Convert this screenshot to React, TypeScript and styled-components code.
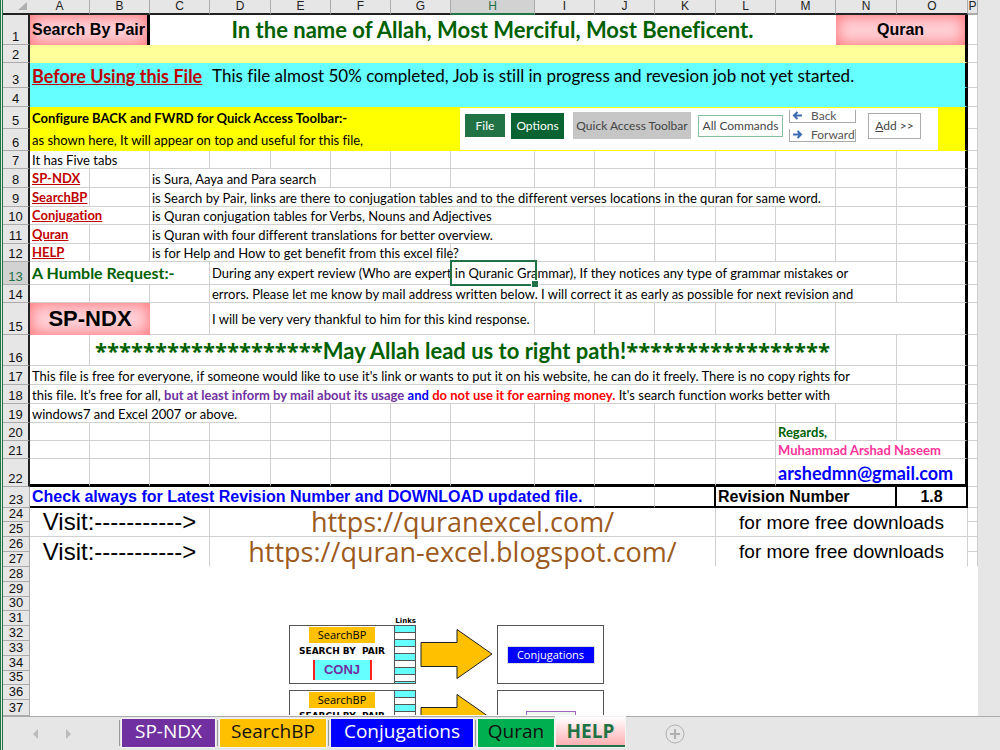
import React from "react";
import styled, { createGlobalStyle, css } from "styled-components";

const GlobalStyle = createGlobalStyle`
  html, body { margin: 0; padding: 0; }
  body {
    background: #e6e6e6;
    color: #000;
    font-family: Lato, "Noto Sans", sans-serif;
    font-variant-ligatures: none;
  }
  * { box-sizing: border-box; }
`;

const GRID = "#d0d0d0";
const ARIAL = '"Liberation Sans", Arial, sans-serif';
const UI = '"Open Sans", "Noto Sans", sans-serif';

const Window = styled.main`
  display: flex;
  flex-direction: column;
  min-height: 100vh;
  border-left: 3px double #217346;
`;

const SheetArea = styled.div`
  flex: 1;
  overflow: hidden;
`;

const Sheet = styled.table`
  table-layout: fixed;
  width: 975px;
  border-collapse: separate;
  border-spacing: 0;
  background: #fff;
`;

const HeadCell = styled.th<{ $active?: boolean; $edge?: boolean }>`
  height: 15px;
  padding: 0;
  font: 400 12px/12px ${ARIAL};
  vertical-align: top;
  color: ${(p) => (p.$active ? "#217346" : "#222")};
  background: ${(p) => (p.$active ? "#d2d2d2" : "#e6e6e6")};
  border-right: 1px solid #ababab;
  border-bottom: 2px solid ${(p) => (p.$active ? "#217346" : p.$edge ? "#ababab" : "#222")};
`;

const Corner = styled(HeadCell)`
  text-align: right;
  border-right: 0;

  svg { display: block; margin: 2px 3px 0 auto; }
`;

const RowHead = styled.th<{ $h: number; $active?: boolean; $framed?: boolean }>`
  height: ${(p) => p.$h}px;
  padding: 0 0 1px;
  font: 400 13px/12px ${ARIAL};
  vertical-align: bottom;
  text-align: center;
  color: ${(p) => (p.$active ? "#217346" : "#111")};
  background: ${(p) => (p.$active ? "#d2d2d2" : "#e6e6e6")};
  border-bottom: 1px solid #ababab;
  border-right: ${(p) => (p.$framed ? "2px solid #222" : "1px solid #ababab")};
`;

type Tone = "pale" | "cyan" | "yellow" | "pink";
const tones: Record<Tone, string> = { pale: "#ffff99", cyan: "#66ffff", yellow: "#ffff00", pink: "#ffd0d6" };

type Align = "left" | "center";
type VAlign = "top" | "middle" | "bottom";

const Cell = styled.td<{
  $tone?: Tone; $align?: Align; $v?: VAlign; $plain?: boolean; $open?: boolean;
  $right?: number; $bottom?: number;
}>`
  position: relative;
  padding: 0 2px;
  white-space: nowrap;
  text-align: ${(p) => p.$align ?? "left"};
  vertical-align: ${(p) => p.$v ?? (p.$align === "center" ? "middle" : "bottom")};
  border-right: 1px solid ${GRID};
  border-bottom: 1px solid ${GRID};
  ${(p) => p.$tone && css`background: ${tones[p.$tone]}; border-color: ${tones[p.$tone]};`}
  ${(p) => p.$tone === "pink" && css`border-width: 0; box-shadow: inset 0 0 14px 2px #ff7c80;`}
  ${(p) => p.$plain && css`border-color: #fff;`}
  ${(p) => p.$open && css`border-bottom-color: #fff;`}
  ${(p) => p.$right && css`border-right: ${p.$right}px solid #000;`}
  ${(p) => p.$bottom && css`border-bottom: ${p.$bottom}px solid #000;`}
`;

const Body = styled.span`
  display: block;
  font-size: 13px;
  line-height: 16px;
`;
const Strong = styled(Body)`font-weight: 700;`;
const Title = styled.h1`
  margin: 0;
  font-size: 22px;
  line-height: 28px;
  font-weight: 700;
  color: #006100;
`;
const Stars = styled.span`font-family: ${UI};`;
const Notice = styled(Body)`font-size: 17px; line-height: 22px;`;
const Request = styled(Body)`font-size: 16px; line-height: 20px; font-weight: 700; color: #006100;`;
const Label = styled(Body)<{ $size: number; $color?: string; $bold?: boolean }>`
  font: ${(p) => (p.$bold ? 700 : 400)} ${(p) => p.$size}px/${(p) => p.$size + 2}px ${ARIAL};
  color: ${(p) => p.$color ?? "#000"};
`;
const SheetLink = styled.a<{ $size?: number }>`
  display: block;
  font-size: ${(p) => p.$size ?? 13}px;
  line-height: ${(p) => (p.$size ?? 13) + 4}px;
  font-weight: 700;
  color: #c00000;
`;
const SiteLink = styled.a`
  display: block;
  font: 400 27px/28px ${UI};
  color: #9c5a1c;
  text-decoration: none;
`;
const MailLink = styled.a`
  display: block;
  font-size: 18px;
  line-height: 22px;
  font-weight: 700;
  color: #0000ff;
  text-decoration: none;
`;
const Tint = styled.b<{ $color: string }>`color: ${(p) => p.$color};`;

const Selection = styled.span`
  position: absolute;
  top: -2px;
  bottom: -2px;
  left: 240px;
  width: 87px;
  border: 2px solid #217346;

  &::after {
    content: "";
    position: absolute;
    right: -3px;
    bottom: -3px;
    width: 6px;
    height: 6px;
    background: #217346;
    outline: 1px solid #fff;
  }
`;

/* Quick access strip */
const Strip = styled.div`
  display: flex;
  align-items: center;
  width: 478px;
  height: 42px;
  margin-left: 7px;
  padding: 0 5px 6px;
  background: #fff;
  color: #444;
`;
const StripButton = styled.button<{ $w: number; $h: number; $bg?: string; $fg?: string; $line?: string; $gap: number }>`
  width: ${(p) => p.$w}px;
  height: ${(p) => p.$h}px;
  margin: 0 ${(p) => p.$gap}px 0 0;
  padding: 0;
  font: 400 12px/14px Lato, sans-serif;
  white-space: nowrap;
  color: ${(p) => p.$fg ?? "#444"};
  background: ${(p) => p.$bg ?? "#fff"};
  border: 1px solid ${(p) => p.$line ?? p.$bg ?? "#fff"};
`;
const Moves = styled.div`
  display: flex;
  flex-direction: column;
  gap: 6px;
  margin-right: 12px;
`;
const Move = styled.button`
  display: flex;
  align-items: center;
  width: 67px;
  height: 13px;
  padding: 0 0 0 2px;
  font: 400 12px/12px Lato, sans-serif;
  color: #555;
  background: #fff;
  border: 1px solid #aaa;
  border-top: 0;

  svg { flex: none; }
  span { padding-left: 8px; }
`;

/* Diagram */
const Canvas = styled.div`
  display: flex;
  flex-direction: column;
  gap: 6px;
  height: 148px;
  padding: 50px 0 0 257px;
  overflow: hidden;
`;
const Flow = styled.div`display: flex; height: 59px; flex: none;`;
const LinksLabel = styled.div`
  width: 127px;
  height: 8px;
  margin-bottom: -6px;
  font: 700 7px/8px "DejaVu Sans", sans-serif;
  text-align: right;
`;
const Card = styled.div<{ $w: number }>`
  display: flex;
  width: ${(p) => p.$w}px;
  border: 1px solid #555;
  font-family: ${UI};
`;
const CardBody = styled.div`
  display: flex;
  flex: 1;
  flex-direction: column;
  align-items: center;
`;
const OrangeTag = styled.div`
  width: 66px;
  height: 16px;
  margin-top: 1px;
  font-size: 11px;
  line-height: 15px;
  text-align: center;
  background: #ffc000;
`;
const Caption = styled.div`
  height: 17px;
  font: 700 9px/17px "DejaVu Sans", sans-serif;
  white-space: pre;
`;
const Conj = styled.div`
  width: 59px;
  height: 20px;
  font: 700 13px/20px ${ARIAL};
  text-align: center;
  color: #7030a0;
  background: #66ffff;
  border: solid #ff2020;
  border-width: 0 2px;
`;
const Stripes = styled.div`
  width: 21px;
  border-left: 1px solid #555;
  background: repeating-linear-gradient(#66ffff 0 6px, #555 6px 7px, #fff 7px 13px, #555 13px 14px);
`;
const Arrow = styled.svg`flex: none; margin: 0 4px 0 4px;`;
const TargetCard = styled(Card)`align-items: center; justify-content: center;`;
const BlueTag = styled.div`
  width: 88px;
  height: 18px;
  font-size: 11px;
  line-height: 16px;
  text-align: center;
  color: #fff;
  background: #0000ff;
  border: 1px solid #ddd;
`;
const QuranTag = styled.div`
  width: 50px;
  height: 18px;
  font-size: 11px;
  line-height: 13px;
  text-align: center;
  color: #217346;
  background: #eef6ee;
  border: 1px solid #a060c0;
`;

/* Sheet tabs */
const TabBar = styled.nav`
  display: flex;
  align-items: flex-start;
  height: 34px;
  border-top: 1px solid #ababab;
  background: #e6e6e6;
`;
const Scroll = styled.div`
  display: flex;
  gap: 24px;
  width: 116px;
  padding: 12px 0 0 28px;
`;
const IconButton = styled.button`
  display: flex;
  padding: 0;
  border: 0;
  background: none;
`;
const Tab = styled.button<{ $w: number; $bg: string; $fg: string }>`
  width: ${(p) => p.$w}px;
  height: 28px;
  margin: 2px 2px 0 0;
  padding: 0 0 4px;
  font: 400 19px/22px ${UI};
  color: ${(p) => p.$fg};
  background: ${(p) => p.$bg};
  border: 0;
  outline: 1px solid #f4f4f4;
`;
const Divider = styled.span`
  width: 1px;
  height: 26px;
  margin: 3px 2px 0 0;
  background: #999;
`;
const ActiveTab = styled(Tab)`
  height: 30px;
  margin-top: 0;
  padding-bottom: 0;
  font-weight: 700;
  border-bottom: 2px solid #217346;
`;
const AddSheet = styled(IconButton)`margin: 7px 0 0 38px;`;

const BackIcon = ({ flip }: { flip?: boolean }) => (
  <svg width="11" height="9" viewBox="0 0 11 9" fill="none" stroke="#3a6cb4" strokeWidth="2">
    {flip ? <path d="M1 4.500H9M5.500 1L9 4.500L5.500 8" /> : <path d="M10 4.500H2M5.500 1L2 4.500L5.500 8" />}
  </svg>
);

const QuickAccess = () => (
  <Strip>
    <StripButton $w={40} $h={23} $bg="#217346" $fg="#fff" $gap={6}>File</StripButton>
    <StripButton $w={53} $h={26} $bg="#0a6332" $fg="#fff" $gap={9}>Options</StripButton>
    <StripButton $w={118} $h={27} $bg="#c6c6c6" $gap={7}>Quick Access Toolbar</StripButton>
    <StripButton $w={85} $h={22} $line="#86bfa0" $gap={6}>All Commands</StripButton>
    <Moves>
      <Move><BackIcon /><span>Back</span></Move>
      <Move><BackIcon flip /><span>Forward</span></Move>
    </Moves>
    <StripButton $w={53} $h={26} $line="#ababab" $gap={0}><u>A</u>dd &gt;&gt;</StripButton>
  </Strip>
);

const FlowRow = ({ children }: { children: React.ReactNode }) => (
  <Flow>
    <Card $w={127}>
      <CardBody>
        <OrangeTag>SearchBP</OrangeTag>
        <Caption>SEARCH BY  PAIR</Caption>
        <Conj>CONJ</Conj>
      </CardBody>
      <Stripes />
    </Card>
    <Arrow width="73" height="59" viewBox="0 0 73 59">
      <path d="M1 17.500H37V4.500L72 29L37 53.500V41.500H1Z" fill="#ffc000" stroke="#222" />
    </Arrow>
    <TargetCard $w={107}>{children}</TargetCard>
  </Flow>
);

const Diagram = () => (
  <Canvas>
    <LinksLabel>Links</LinksLabel>
    <FlowRow><BlueTag>Conjugations</BlueTag></FlowRow>
    <FlowRow><QuranTag>Quran</QuranTag></FlowRow>
  </Canvas>
);

type CellSpec = {
  span?: number; rows?: number; body?: React.ReactNode;
  tone?: Tone; align?: Align; v?: VAlign; right?: number; bottom?: number; plain?: boolean; open?: boolean;
};
const blanks = (n: number): CellSpec[] => Array.from({ length: n }, () => ({}));

const topic = (name: string, wide: boolean, span: number, text: string, rest: number): CellSpec[] => [
  { span: wide ? 2 : 1, body: <SheetLink href={"#" + name}>{name}</SheetLink> },
  ...blanks(wide ? 0 : 1),
  { span, body: <Body>{text}</Body> },
  ...blanks(rest),
];

const visit = (url: string, open: boolean): CellSpec[] => [
  { span: 3, rows: 2, open, align: "center", body: <Label $size={24}>Visit:-----------&gt;</Label> },
  { span: 8, rows: 2, open, align: "center", body: <SiteLink href={url}>{url}</SiteLink> },
  { span: 4, rows: 2, open, align: "center", body: <Label $size={19}>for more free downloads</Label> },
  {},
];

const rows: { h: number; cells: CellSpec[] }[] = [
  { h: 30, cells: [
    { span: 2, tone: "pink", right: 3, align: "center", body: <Label $size={16} $bold>Search By Pair</Label> },
    { span: 11, align: "center", plain: true, body: <Title>In the name of Allah, Most Merciful, Most Beneficent.</Title> },
    { span: 2, tone: "pink", align: "center", body: <Label $size={16} $bold>Quran</Label> },
    {},
  ] },
  { h: 18, cells: [{ span: 15, tone: "pale" }, {}] },
  { h: 25, cells: [
    { span: 3, tone: "cyan", body: <SheetLink href="#before" $size={18}>Before Using this File</SheetLink> },
    { span: 12, tone: "cyan", body: <Notice>This file almost 50% completed, Job is still in progress and revesion job not yet started.</Notice> },
    {},
  ] },
  { h: 19, cells: [{ span: 15, tone: "cyan" }, {}] },
  { h: 22, cells: [
    { span: 7, tone: "yellow", v: "middle", body: <Strong>Configure BACK and FWRD for Quick Access Toolbar:-</Strong> },
    { span: 8, rows: 2, tone: "yellow", v: "middle", body: <QuickAccess /> },
    {},
  ] },
  { h: 22, cells: [{ span: 7, tone: "yellow", v: "middle", body: <Body>as shown here, It will appear on top and useful for this file,</Body> }, {}] },
  { h: 18, cells: [{ span: 2, body: <Body>It has Five tabs</Body> }, ...blanks(14)] },
  { h: 19, cells: topic("SP-NDX", false, 3, "is Sura, Aaya and Para search", 11) },
  { h: 19, cells: topic("SearchBP", false, 11, "is Search by Pair, links are there to conjugation tables and to the different verses locations in the quran for same word.", 3) },
  { h: 18, cells: topic("Conjugation", true, 6, "is Quran conjugation tables for Verbs, Nouns and Adjectives", 8) },
  { h: 19, cells: topic("Quran", false, 6, "is Quran with four different translations for better overview.", 8) },
  { h: 18, cells: topic("HELP", false, 5, "is for Help and How to get benefit from this excel file?", 9) },
  { h: 23, cells: [
    { span: 3, v: "middle", body: <Request>A Humble Request:-</Request> },
    { span: 11, v: "middle", body: <><Body>During any expert review (Who are expert in Quranic Grammar), If they notices any type of grammar mistakes or</Body><Selection /></> },
    ...blanks(2),
  ] },
  { h: 18, cells: [
    ...blanks(3),
    { span: 11, body: <Body>errors. Please let me know by mail address written below. I will correct it as early as possible for next revision and</Body> },
    ...blanks(2),
  ] },
  { h: 32, cells: [
    { span: 2, tone: "pink", align: "center", body: <Label $size={22} $bold>SP-NDX</Label> },
    {},
    { span: 5, v: "middle", body: <Body>I will be very very thankful to him for this kind response.</Body> },
    ...blanks(5),
    { span: 2 },
    {},
  ] },
  { h: 31, cells: [
    {},
    { span: 12, align: "center", body: (
      <Title as="div"><Stars>*******************</Stars>May Allah lead us to right path!<Stars>*****************</Stars></Title>
    ) },
    ...blanks(3),
  ] },
  { h: 19, cells: [
    { span: 13, body: <Body>This file is free for everyone, if someone would like to use it's link or wants to put it on his website, he can do it freely. There is no copy rights for</Body> },
    ...blanks(3),
  ] },
  { h: 19, cells: [
    { span: 14, body: (
      <Body>
        this file. It’s free for all, <Tint $color="#7030a0">but at least inform by mail about its usage</Tint>{" "}
        <Tint $color="#0000ff">and</Tint> <Tint $color="#ff0000">do not use it for earning money.</Tint> It's search function works better with
      </Body>
    ) },
    ...blanks(2),
  ] },
  { h: 19, cells: [{ span: 4, body: <Body>windows7 and Excel 2007 or above.</Body> }, ...blanks(12)] },
  { h: 18, cells: [...blanks(12), { body: <Body><Tint $color="#006100">Regards,</Tint></Body> }, ...blanks(3)] },
  { h: 18, cells: [...blanks(12), { span: 3, body: <Body><Tint $color="#ff3399">Muhammad Arshad Naseem</Tint></Body> }, {}] },
  { h: 28, cells: [...blanks(12), { span: 3, body: <MailLink href="mailto:arshedmn@gmail.com">arshedmn@gmail.com</MailLink> }, {}] },
  { h: 21, cells: [
    { span: 9, bottom: 2, body: <Label $size={16} $bold $color="#0000ff">Check always for Latest Revision Number and DOWNLOAD updated file.</Label> },
    { bottom: 2 },
    { bottom: 2, right: 2 },
    { span: 3, bottom: 2, right: 2, body: <Label $size={16} $bold>Revision Number</Label> },
    { bottom: 2, right: 2, align: "center", body: <Label $size={16} $bold>1.8</Label> },
    {},
  ] },
  { h: 14, cells: visit("https://quranexcel.com/", false) },
  { h: 15, cells: [{}] },
  { h: 15, cells: visit("https://quran-excel.blogspot.com/", true) },
  { h: 15, cells: [{ open: true }] },
  { h: 15, cells: [{ span: 16, rows: 10, plain: true, v: "top", body: <Diagram /> }] },
  ...[15, 14, 15, 15, 15, 15, 14, 15, 16].map((h) => ({ h, cells: [] as CellSpec[] })),
];

const letters = "ABCDEFGHIJKLMNOP".split("");
const widths = [60, 60, 60, 61, 60, 60, 60, 84, 60, 60, 61, 60, 60, 61, 71, 10];

const tabs = [
  { name: "SP-NDX", w: 93, bg: "#7030a0", fg: "#fff" },
  { name: "SearchBP", w: 106, bg: "#ffc000", fg: "#111" },
  { name: "Conjugations", w: 142, bg: "#0000ff", fg: "#fff" },
  { name: "Quran", w: 76, bg: "#00b050", fg: "#111" },
];

const SheetRow = ({ index, h, cells }: { index: number; h: number; cells: CellSpec[] }) => {
  const framed = index <= 22;
  let col = 0;
  return (
    <tr>
      <RowHead scope="row" $h={h} $active={index === 13} $framed={framed}>{index}</RowHead>
      {cells.map((c, i) => {
        col += c.span ?? 1;
        // The strip's row-spanning cell starts after seven columns, so only full rows reach column O here.
        const outer = framed && (col === 15);
        return (
          <Cell
            key={i}
            colSpan={c.span}
            rowSpan={c.rows}
            $tone={c.tone}
            $align={c.align}
            $v={c.v}
            $plain={c.plain}
            $open={c.open}
            $right={outer ? 3 : c.right}
            $bottom={index === 22 && col < 16 ? 3 : c.bottom}
          >
            {c.body}
          </Cell>
        );
      })}
    </tr>
  );
};

export default function App() {
  return (
    <Window>
      <GlobalStyle />
      <SheetArea>
        <Sheet>
          <colgroup>
            <col width={27} />
            {widths.map((w, i) => <col key={i} width={w} />)}
          </colgroup>
          <thead>
            <tr>
              <Corner>
                <svg width="9" height="8" viewBox="0 0 9 8"><path d="M9 0V8H0Z" fill="#b0b0b0" /></svg>
              </Corner>
              {letters.map((l) => (
                <HeadCell key={l} scope="col" $active={l === "H"} $edge={l === "P"}>{l}</HeadCell>
              ))}
            </tr>
          </thead>
          <tbody>
            {rows.map((r, i) => <SheetRow key={i} index={i + 1} h={r.h} cells={r.cells} />)}
          </tbody>
        </Sheet>
      </SheetArea>
      <TabBar aria-label="Sheets">
        <Scroll>
          <IconButton aria-label="Previous sheet">
            <svg width="9" height="10" viewBox="0 0 9 10"><path d="M7 0V10L2 5Z" fill="#bbb" /></svg>
          </IconButton>
          <IconButton aria-label="Next sheet">
            <svg width="9" height="10" viewBox="0 0 9 10"><path d="M2 0V10L7 5Z" fill="#bbb" /></svg>
          </IconButton>
        </Scroll>
        {tabs.map((t) => (
          <React.Fragment key={t.name}>
            <Divider />
            <Tab $w={t.w} $bg={t.bg} $fg={t.fg}>{t.name}</Tab>
          </React.Fragment>
        ))}
        <ActiveTab $w={69} $bg="linear-gradient(#fff, #ffb0b4)" $fg="#217346" aria-current="page">HELP</ActiveTab>
        <AddSheet aria-label="New sheet">
          <svg width="20" height="20" viewBox="0 0 20 20" fill="none" stroke="#b0b0b0">
            <circle cx="10" cy="10" r="9" />
            <path d="M10 5V15M5 10H15" strokeWidth="2" />
          </svg>
        </AddSheet>
      </TabBar>
    </Window>
  );
}
